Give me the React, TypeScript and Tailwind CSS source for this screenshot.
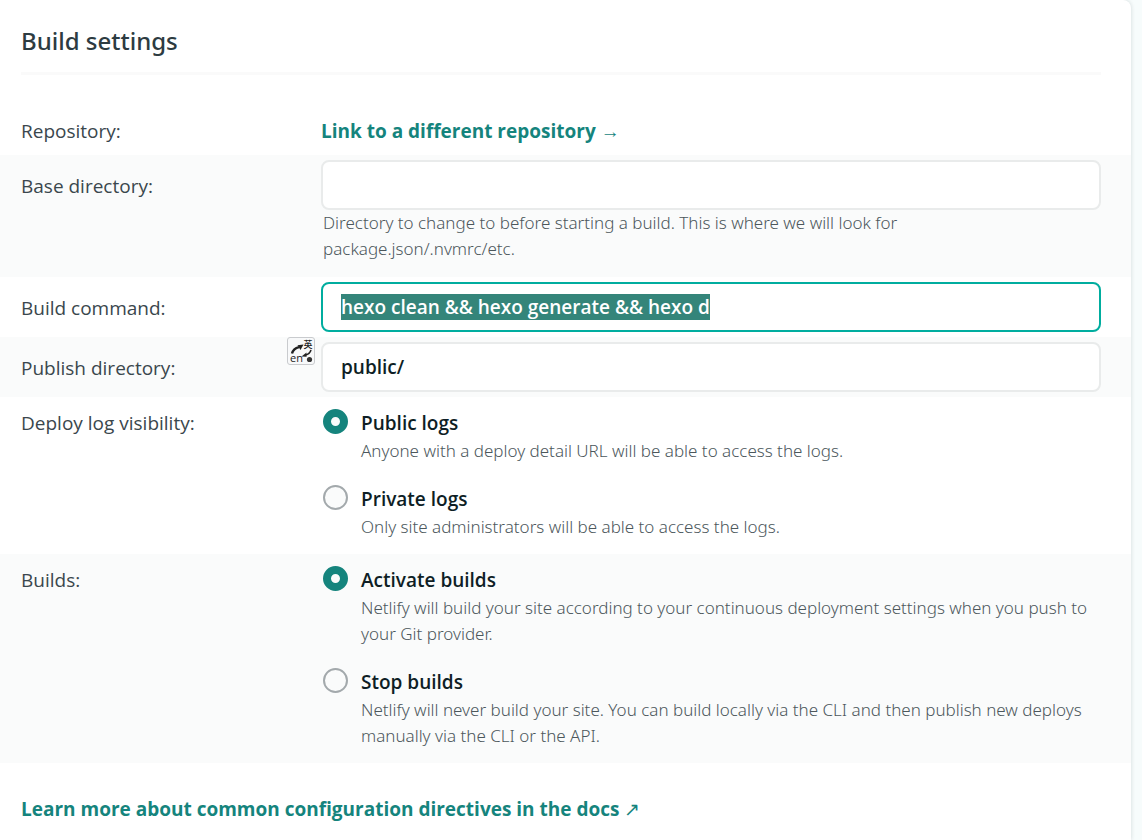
import { useEffect, useRef, useState } from "react";
import type { ReactNode } from "react";

function Row({ label, htmlFor, shaded, className, children }: {
  label: string;
  htmlFor?: string;
  shaded?: boolean;
  className: string;
  children: ReactNode;
}) {
  const row = shaded ? "bg-[#fafbfb]" : "bg-white";
  const text = "w-[300px] shrink-0 text-[19px] leading-[30px] text-[#3a474d]";
  return (
    <div className={`flex items-start pl-[21px] pr-[30px] ${row} ${className}`}>
      {htmlFor ? (
        <label htmlFor={htmlFor} className={`${text} pt-[11px]`}>{label}</label>
      ) : (
        <div className={text}>{label}</div>
      )}
      <div className="min-w-0 flex-1">{children}</div>
    </div>
  );
}

const inputClass =
  "block h-[50px] w-full rounded-lg border-2 border-[#e9ebeb] bg-white px-[18px] text-[19px] leading-7 font-semibold text-[#0e1e25] outline-none focus:border-[#00ad9f] selection:bg-[#34857a] selection:text-white";

const hintClass =
  "text-[17px] leading-[26px] font-light text-[#4c575c] font-['Noto_Sans','Open_Sans',sans-serif]";

type Option = { value: string; title: string; text: string };

function RadioGroup({ name, label, options }: { name: string; label: string; options: Option[] }) {
  const [value, setValue] = useState(options[0].value);
  return (
    <div role="radiogroup" aria-label={label} className="flex flex-col gap-5">
      {options.map((o) => (
        <div key={o.value} className="flex items-start gap-[13px] pl-0.5">
          <input
            type="radio"
            id={o.value}
            name={name}
            checked={value === o.value}
            onChange={() => setValue(o.value)}
            className="mt-px size-[25px] shrink-0 appearance-none rounded-full border-2 border-[#a3a9ac] bg-[#fafbfb] checked:border-8 checked:border-[#15847d]"
          />
          <label htmlFor={o.value} className="block min-w-0 flex-1">
            <span className="block text-[19px] leading-[30px] font-semibold text-[#0e1e25]">{o.title}</span>
            <span className={`block ${hintClass}`}>{o.text}</span>
          </label>
        </div>
      ))}
    </div>
  );
}

function TranslateBadge() {
  return (
    <button
      type="button"
      aria-label="Translate"
      className="absolute -top-[5px] -left-[34px] flex size-7 items-center justify-center rounded-[3px] border border-[#c9cbce] bg-[#f8f9fa]"
    >
      <svg viewBox="0 0 26 26" className="size-[26px]" fill="none">
        <text x="15.5" y="10" fontSize="9" fontWeight="500" fill="#222" fontFamily="Noto Sans CJK SC, sans-serif">英</text>
        <text x="2" y="24" fontSize="11" fill="#222" fontFamily="Open Sans, sans-serif">en</text>
        <path d="M4 15.5C5 12 8 10 11 9.2" stroke="#222" strokeWidth="2.4" />
        <path d="M9.5 7.2L15.5 6.5L12.5 12Z" fill="#222" />
        <path d="M23 12C22 15 20 16.5 17.5 17" stroke="#222" strokeWidth="1.6" />
        <path d="M18.5 14.6L13.5 18.4L18.6 18.8Z" fill="#222" />
        <circle cx="21.5" cy="21.5" r="2.6" fill="#333" />
      </svg>
    </button>
  );
}

export default function App() {
  const command = useRef<HTMLInputElement>(null);
  useEffect(() => {
    command.current?.focus();
    command.current?.select();
  }, []);

  return (
    <div className="min-h-screen bg-[#f7fcfc] pr-[11px] font-['Open_Sans','Noto_Sans',sans-serif]">
      <main className="min-h-screen rounded-tr-lg bg-white shadow-[0_0_4px_rgba(14,30,37,0.16)]">
        <header className="mr-[30px] ml-[21px] border-b-3 border-[#fafafa] pt-6 pb-[14px]">
          <h1 className="text-[24px] leading-[34px] font-medium text-[#2d3b41] font-['Noto_Sans','Open_Sans',sans-serif]">Build settings</h1>
        </header>

        <form onSubmit={(e) => e.preventDefault()} className="pt-[41px]">
          <Row label="Repository:" className="pb-[9px]">
            <a href="#repository" className="text-[19px] leading-[30px] font-bold text-[#15847d]">
              Link to a different repository <span className="font-normal">→</span>
            </a>
          </Row>
          <Row label="Base directory:" htmlFor="base" shaded className="pt-[5px] pb-[15px]">
            <input id="base" type="text" className={inputClass} />
            <p className={`max-w-[640px] pl-0.5 ${hintClass}`}>
              Directory to change to before starting a build. This is where we will look for package.json/.nvmrc/etc.
            </p>
          </Row>
          <Row label="Build command:" htmlFor="command" className="py-[5px]">
            <input
              id="command"
              ref={command}
              type="text"
              defaultValue="hexo clean && hexo generate && hexo d"
              className={inputClass}
            />
          </Row>
          <Row label="Publish directory:" htmlFor="publish" shaded className="py-[5px]">
            <div className="relative">
              <input id="publish" type="text" defaultValue="public/" className={inputClass} />
              <TranslateBadge />
            </div>
          </Row>
          <Row label="Deploy log visibility:" className="pt-[11px] pb-[14px]">
            <RadioGroup
              name="logs"
              label="Deploy log visibility"
              options={[
                { value: "public-logs", title: "Public logs", text: "Anyone with a deploy detail URL will be able to access the logs." },
                { value: "private-logs", title: "Private logs", text: "Only site administrators will be able to access the logs." },
              ]}
            />
          </Row>
          <Row label="Builds:" shaded className="pt-[11px] pb-[14px]">
            <RadioGroup
              name="builds"
              label="Builds"
              options={[
                { value: "activate", title: "Activate builds", text: "Netlify will build your site according to your continuous deployment settings when you push to your Git provider." },
                { value: "stop", title: "Stop builds", text: "Netlify will never build your site. You can build locally via the CLI and then publish new deploys manually via the CLI or the API." },
              ]}
            />
          </Row>
        </form>

        <footer className="px-[21px] pt-[31px]">
          <a href="#docs" className="text-[19px] leading-[30px] font-bold text-[#15847d]">
            Learn more about common configuration directives in the docs <span className="font-normal">↗</span>
          </a>
        </footer>
      </main>
    </div>
  );
}
